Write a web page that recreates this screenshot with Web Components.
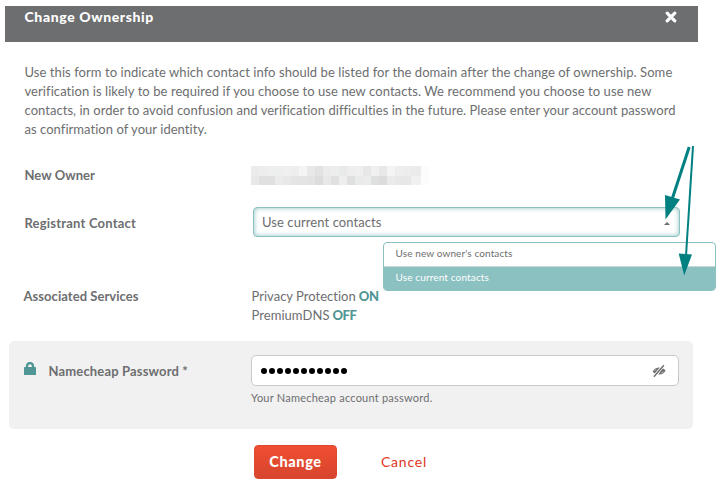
<!DOCTYPE html>
<html lang="en">
<head>
<meta charset="utf-8">
<title>Change Ownership</title>
<style>
  html, body { margin: 0; background: #fff; }
  body { width: 723px; height: 485px; overflow: hidden; font-family: Lato, "Open Sans", sans-serif; font-size: 13px; line-height: 19px; color: #6d6e70; }
</style>
</head>
<body>
<ownership-dialog></ownership-dialog>
<script>
class UiElement extends HTMLElement {
  constructor() {
    super();
    const t = document.createElement('template');
    t.innerHTML = this.constructor.markup;
    this.attachShadow({ mode: 'open' }).appendChild(t.content.cloneNode(true));
  }
}

/* A single line of text whose tracking is set so that it fills the given width. */
customElements.define('text-line', class extends UiElement {
  static markup = `<style>:host{display:block;white-space:nowrap;width:max-content}</style><span><slot></slot></span>`;
  connectedCallback() {
    const want = Number(this.getAttribute('w'));
    const have = this.shadowRoot.querySelector('span').getBoundingClientRect().width;
    const n = this.textContent.length;
    if (want && n) this.style.letterSpacing = ((want - have) / n).toFixed(3) + 'px';
  }
});

customElements.define('dialog-header', class extends UiElement {
  static markup = `<style>
    :host{display:flex;justify-content:space-between;align-items:flex-start;box-sizing:border-box;width:693px;height:36px;margin-left:5px;padding:1px 21px 0 19.500px;background:#6d6e70;color:#fff;font-weight:900;font-size:14px}
    svg{display:block;margin-top:4px}
  </style><slot></slot>
  <svg width="12" height="12" viewBox="0 0 12 12"><path d="M2.2 2.2 9.800 9.800M9.800 2.200 2.200 9.800" stroke="#fff" stroke-width="3.200" stroke-linecap="round"/></svg>`;
});

customElements.define('form-row', class extends UiElement {
  static markup = `<style>
    :host{display:grid;grid-template-columns:227px 1fr;align-items:start}
    .label{font-weight:bold}
  </style><div class="label"><slot name="label"></slot></div><div><slot></slot></div>`;
});

customElements.define('masked-name', class extends UiElement {
  static markup = `<style>
    :host{display:grid;grid-template-columns:repeat(20,8px) 10px 8px;grid-template-rows:10px 9px;width:178px}
  </style>`;
  connectedCallback() {
    const rows = [
      'ebebeb ededed eeeeee edefee eeefee eeeeee f4f4f4 e8e8e8 e2e2e2 ebebeb ededed e8eaea eeeeee efefef e7e7e7 f0f0f0 e8e8e8 f4f4f4 eeeeee ededed ebebeb fcfcfc',
      'e8e8e8 e0e0e0 e0e0e0 ebebeb e8e8e8 e4e4e4 e4e4e4 e3e3e3 dcdcdc e8e8e8 e0e0e0 eeeeee e0e0e0 e8ebea ebebeb dde0df dcdcdc ebebeb e7e7e7 e7e7e7 f0f0f0 fcfcfc'];
    for (const c of rows.join(' ').split(' ')) {
      const i = document.createElement('i');
      i.style.background = '#' + c;
      this.shadowRoot.appendChild(i);
    }
  }
});

customElements.define('option-item', class extends UiElement {
  static markup = `<style>
    :host{display:flex;align-items:center;box-sizing:border-box;height:24px;padding:0 11.500px 5px;border-top:1px solid transparent;font-size:10px;line-height:14px}
    :host([selected]){height:25px;margin-top:-1px;padding-bottom:4px;border-top:1px solid #cdd6d6;background:#8bc1c1;color:#fff}
  </style><slot></slot>`;
});

customElements.define('select-box', class extends UiElement {
  static markup = `<style>
    :host{display:block;position:relative;width:427px;height:30px}
    .field{display:flex;align-items:center;justify-content:space-between;box-sizing:border-box;height:30px;padding:0 9px 0 8px;border:1px solid #8bc1c1;border-radius:4px;box-shadow:inset 0 0 5px #8bc1c1;background:#fff}
    .menu{position:absolute;left:130px;top:35px;width:333px;height:49px;box-sizing:border-box;border:1px solid #8bc1c1;border-radius:4px;overflow:hidden;background:#fff}
    .caret{width:0;border:3px solid transparent;border-top:0;border-bottom:3px solid #6d6e70;margin-top:3px}
  </style>
  <div class="field"><slot name="value"></slot><span class="caret"></span></div>
  <div class="menu"><slot></slot></div>`;
});

customElements.define('lock-icon', class extends UiElement {
  static markup = `<style>:host{display:block;width:12px;height:13px}svg{display:block}</style>
  <svg width="12" height="13" viewBox="0 0 12 13"><path d="M3 6V4a3 3 0 0 1 6 0v2" fill="none" stroke="#4f9694" stroke-width="2.300"/><rect y="5" width="12" height="8" rx=".6" fill="#4f9694"/></svg>`;
});

customElements.define('password-field', class extends UiElement {
  static markup = `<style>
    :host{display:flex;align-items:center;justify-content:space-between;box-sizing:border-box;width:428px;height:31px;padding:0 12px 0 9px;border:1px solid #c8c9c9;border-radius:5px;background:#fff}
    .dots{display:flex;gap:2px}
    .dots i{width:6px;height:6px;border-radius:50%;background:#000}
    svg{display:block}
  </style>
  <div class="dots">${'<i></i>'.repeat(11)}</div>
  <svg width="14" height="12" viewBox="0 0 14 12"><path d="M.7 6.400C2 3.800 4.500 2.500 8 2.600L4.300 8.800C2.600 8.400 1.400 7.700.7 6.400ZM13.500 5.800C12.300 8.400 9.800 9.600 6.400 9.400L10 3.300C11.700 3.600 12.900 4.500 13.500 5.800Z" fill="#6d6e70"/><path d="M2.400 5.800Q3 4.600 4.500 4.200M9.300 8Q11 7.700 11.800 6.400" fill="none" stroke="#fff" stroke-width=".5"/><path d="M2.300 11.200 11.300.8" stroke="#fff" stroke-width="3"/><path d="M2.300 11.200 11.500.8" stroke="#6d6e70" stroke-width="1.500" stroke-linecap="round"/></svg>`;
});

customElements.define('password-panel', class extends UiElement {
  static markup = `<style>
    :host{display:grid;grid-template-columns:26px 202px 1fr;align-items:start;box-sizing:border-box;width:684px;height:88px;margin-left:9px;padding:14px 14px 0 14px;border-radius:5px;background:#f1f1f1}
    lock-icon{margin:7px 0 0 1px}
    .label{font-weight:bold;padding-top:7px;margin-left:-.5px}
    .hint{font-size:11px;line-height:16px;padding-top:4px}
  </style>
  <lock-icon></lock-icon><div class="label"><slot name="label"></slot></div>
  <div><password-field></password-field><div class="hint"><slot name="hint"></slot></div></div>`;
});

customElements.define('action-button', class extends UiElement {
  static markup = `<style>
    :host{display:flex;align-items:center;justify-content:center;box-sizing:border-box;height:34px;padding-bottom:2px;color:#de3723;font-size:14px}
    :host([primary]){width:83px;border-radius:4px;border:1px solid #dc4830;background:linear-gradient(#f04e30,#d7452f);color:#fff;font-weight:900;font-size:14.500px}
  </style><slot></slot>`;
});

customElements.define('pointer-arrows', class extends UiElement {
  static markup = `<style>:host{position:absolute;left:660px;top:140px;pointer-events:none}svg{display:block}</style>
  <svg width="40" height="140" viewBox="660 140 40 140"><g fill="#008080" stroke="#008080"><path d="M689.200 147 672.500 198" stroke-width="3"/><path d="M693 146 686 256" stroke-width="2"/><path d="M665 195 680 199.500 665.500 219.500ZM678.700 253.500 692 254.500 684.200 275.500Z" stroke="none"/></g></svg>`;
});

customElements.define('ownership-dialog', class extends UiElement {
  static markup = `<style>
    :host{display:flow-root;position:relative;padding-top:6px}
    .intro{padding:21px 0 0 24.500px}
    form-row{margin-left:24px}
    .owner{margin-top:27px}
    .owner text-line,.contact text-line[slot=label]{margin-left:.5px}
    .contact{margin-top:22px}
    .contact text-line[slot=label]{margin-top:7px}
    .contact select-box{margin-left:2px}
    .services{margin-top:50px}
    .services text-line[slot=label]{margin-left:-.5px}
    .service{display:flex;gap:3px;margin-left:.5px}
    b{color:#4f9694;font-weight:900}
    password-panel{margin-top:16px}
    .actions{display:flex;gap:44px;margin:16px 0 0 254px}
  </style>
  <dialog-header><text-line w="129.500">Change Ownership</text-line></dialog-header>
  <div class="intro">
    <text-line w="647.500">Use this form to indicate which contact info should be listed for the domain after the change of ownership. Some</text-line>
    <text-line w="627">verification is likely to be required if you choose to use new contacts. We recommend you choose to use new</text-line>
    <text-line w="650.500">contacts, in order to avoid confusion and verification difficulties in the future. Please enter your account password</text-line>
    <text-line w="182.500">as confirmation of your identity.</text-line>
  </div>
  <form-row class="owner"><text-line slot="label" w="70.500">New Owner</text-line><masked-name></masked-name></form-row>
  <form-row class="contact"><text-line slot="label" w="111.500">Registrant Contact</text-line>
    <select-box><text-line slot="value" w="119.500">Use current contacts</text-line>
      <option-item><text-line w="117">Use new owner's contacts</text-line></option-item>
      <option-item selected><text-line w="93.500">Use current contacts</text-line></option-item>
    </select-box></form-row>
  <form-row class="services"><text-line slot="label" w="115">Associated Services</text-line>
    <div class="service"><text-line w="104.500">Privacy Protection</text-line><b><text-line w="20">ON</text-line></b></div>
    <div class="service"><text-line w="78">PremiumDNS</text-line><b><text-line w="24">OFF</text-line></b></div>
  </form-row>
  <password-panel><text-line slot="label" w="139.500">Namecheap Password *</text-line><text-line slot="hint" w="181.500">Your Namecheap account password.</text-line></password-panel>
  <div class="actions"><action-button primary><text-line w="52.500">Change</text-line></action-button><action-button><text-line w="46">Cancel</text-line></action-button></div>
  <pointer-arrows></pointer-arrows>`;
});
</script>
</body>
</html>
